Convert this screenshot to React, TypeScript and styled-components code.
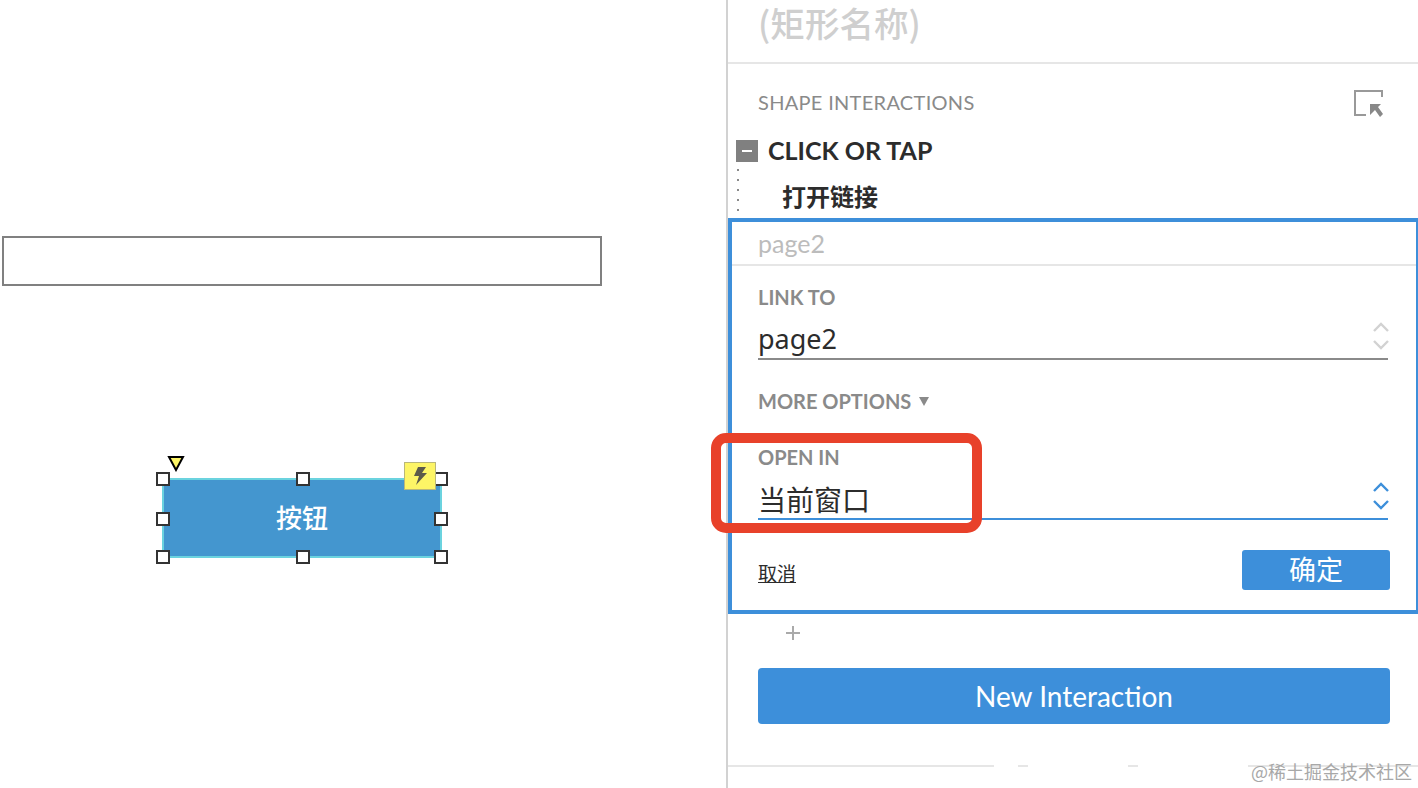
import * as React from 'react';
import styled, { createGlobalStyle } from 'styled-components';

const GlobalStyle = createGlobalStyle`
  html, body {
    margin: 0;
    padding: 0;
    background: #fff;
  }
  body {
    font-family: "Lato", "Noto Sans CJK SC", sans-serif;
  }
`;

const handles = [
  { x: 163, y: 479 },
  { x: 303, y: 479 },
  { x: 441, y: 479 },
  { x: 163, y: 519 },
  { x: 441, y: 519 },
  { x: 163, y: 557 },
  { x: 303, y: 557 },
  { x: 441, y: 557 },
];

const Stepper = ({ color }: { color: string }) => (
  <StepperIcon width="18" height="30" viewBox="0 0 18 30" fill="none" stroke={color} strokeWidth="2.4">
    <path d="M2 10 L9 3 L16 10" />
    <path d="M2 20 L9 27 L16 20" />
  </StepperIcon>
);

export default function App() {
  return (
    <Page>
      <GlobalStyle />
      <Canvas>
        <TextBox />
        <ShapeButton>按钮</ShapeButton>
        {handles.map((h, i) => (
          <Handle key={i} $x={h.x} $y={h.y} />
        ))}
        <Marker width="18" height="17" viewBox="0 0 18 17">
          <path d="M2 2 H16 L9 15 Z" fill="#fdf566" stroke="#000" strokeWidth="2" strokeLinejoin="miter" />
        </Marker>
        <Badge>
          <svg width="16" height="20" viewBox="0 0 16 20">
            <path d="M6 1 H14 L10 7 H15 L4 19 L7 10 H2 Z" fill="#5c5a4a" />
          </svg>
        </Badge>
      </Canvas>

      <Panel>
        <TitleSection>(矩形名称)</TitleSection>

        <InteractionsHeader>
          <SectionLabel>SHAPE INTERACTIONS</SectionLabel>
          <svg width="30" height="30" viewBox="0 0 30 30" fill="none">
            <path d="M12 27 H1 V3 H28 V9" stroke="#999" strokeWidth="2" />
            <path d="M16 16 H27 L24 19 L29 26 L26 29 L21 22 L16 27 Z" fill="#888" />
          </svg>
        </InteractionsHeader>

        <EventRow>
          <Collapse />
          <EventName>CLICK OR TAP</EventName>
        </EventRow>

        <ActionRow>打开链接</ActionRow>

        <EditBox>
          <EditHeader>page2</EditHeader>
          <EditBody>
            <FieldLabel>LINK TO</FieldLabel>
            <SelectRow>
              <SelectValue>page2</SelectValue>
              <Stepper color="#d2d2d2" />
            </SelectRow>

            <MoreOptions>
              MORE OPTIONS <MoreArrow />
            </MoreOptions>

            <OpenInLabel>OPEN IN</OpenInLabel>
            <SelectRow $active>
              <SelectValue $cjk>当前窗口</SelectValue>
              <Stepper color="#3d8fda" />
            </SelectRow>

            <Actions>
              <CancelLink>取消</CancelLink>
              <ConfirmButton>确定</ConfirmButton>
            </Actions>
          </EditBody>
        </EditBox>

        <PlusIcon width="16" height="16" viewBox="0 0 16 16" stroke="#aaa" strokeWidth="2">
          <path d="M8 1 V15 M1 8 H15" />
        </PlusIcon>

        <NewInteraction>New Interaction</NewInteraction>

        <BottomRule />
      </Panel>

      <Highlight />
      <Watermark>@稀土掘金技术社区</Watermark>
    </Page>
  );
}

const Page = styled.div`
  position: relative;
  display: flex;
  width: 1418px;
  height: 788px;
  overflow: hidden;
  background: #fff;
`;

const Canvas = styled.div`
  position: relative;
  flex: 0 0 726px;
  height: 100%;
`;

const TextBox = styled.div`
  position: absolute;
  left: 2px;
  top: 236px;
  width: 600px;
  height: 50px;
  box-sizing: border-box;
  border: 2px solid #808080;
`;

const ShapeButton = styled.div`
  position: absolute;
  left: 162px;
  top: 478px;
  width: 280px;
  height: 80px;
  box-sizing: border-box;
  padding-bottom: 4px;
  display: flex;
  align-items: center;
  justify-content: center;
  background: #4496cf;
  border: 2px solid #6bd3df;
  color: #fff;
  font-size: 26px;
  font-weight: 500;
  font-family: "Noto Sans CJK SC", sans-serif;
`;

const Handle = styled.div<{ $x: number; $y: number }>`
  position: absolute;
  left: ${props => props.$x - 7}px;
  top: ${props => props.$y - 7}px;
  width: 14px;
  height: 14px;
  box-sizing: border-box;
  background: #fff;
  border: 2px solid #333;
`;

const Marker = styled.svg`
  position: absolute;
  left: 167px;
  top: 455px;
`;

const Badge = styled.div`
  position: absolute;
  left: 404px;
  top: 462px;
  width: 32px;
  height: 28px;
  box-sizing: border-box;
  display: flex;
  align-items: center;
  justify-content: center;
  background: #fdf566;
  border: 1px solid #b9b77a;
`;

const Panel = styled.div`
  flex: 1;
  min-width: 0;
  height: 100%;
  box-sizing: border-box;
  border-left: 2px solid #d2d2d2;
  display: flex;
  flex-direction: column;
`;

const TitleSection = styled.div`
  height: 64px;
  flex: none;
  box-sizing: border-box;
  padding: 0 0 18px 30px;
  display: flex;
  align-items: center;
  border-bottom: 2px solid #e6e6e6;
  color: #cfcfcf;
  font-size: 34.6px;
  line-height: 40px;
  font-weight: 500;
  font-family: "Noto Sans CJK SC", sans-serif;
`;

const InteractionsHeader = styled.div`
  height: 68px;
  flex: none;
  box-sizing: border-box;
  padding: 10px 34px 0 30px;
  display: flex;
  align-items: center;
  justify-content: space-between;
`;

const SectionLabel = styled.div`
  margin-bottom: 2px;
  color: #8a8a8a;
  font-size: 20px;
  letter-spacing: 0.3px;
`;

const EventRow = styled.div`
  height: 36px;
  flex: none;
  box-sizing: border-box;
  padding: 2px 0 0 8px;
  display: flex;
  align-items: center;
  gap: 10px;
`;

const Collapse = styled.div`
  position: relative;
  width: 22px;
  height: 22px;
  background: #808080;

  &::after {
    content: "";
    position: absolute;
    left: 6px;
    top: 10px;
    width: 10px;
    height: 2px;
    background: #fff;
  }
`;

const EventName = styled.div`
  margin-bottom: 2px;
  color: #2c2c2c;
  font-size: 25px;
  font-weight: 700;
`;

const ActionRow = styled.div`
  height: 50px;
  flex: none;
  box-sizing: border-box;
  padding: 4px 0 0 54px;
  display: flex;
  align-items: center;
  background: repeating-linear-gradient(180deg, transparent 0 1px, #8a8a8a 1px 3px, transparent 3px 10px) 9px 0 / 2px 100% no-repeat;
  color: #2c2c2c;
  font-size: 24px;
  font-weight: 700;
  font-family: "Noto Sans CJK SC", sans-serif;
`;

const EditBox = styled.div`
  height: 396px;
  flex: none;
  box-sizing: border-box;
  border: 4px solid #3d8fda;
  border-right-width: 2px;
  display: flex;
  flex-direction: column;
`;

const EditHeader = styled.div`
  height: 44px;
  flex: none;
  box-sizing: border-box;
  padding: 0 0 1px 26px;
  display: flex;
  align-items: center;
  border-bottom: 2px solid #e6e6e6;
  color: #bcbcbc;
  font-size: 25px;
`;

const EditBody = styled.div`
  padding: 17px 28px 0 26px;
  display: flex;
  flex-direction: column;
`;

const FieldLabel = styled.div`
  height: 28px;
  line-height: 28px;
  color: #8a8a8a;
  font-size: 20px;
  font-weight: 700;
`;

const SelectRow = styled.div<{ $active?: boolean }>`
  height: 49px;
  box-sizing: border-box;
  padding-top: 8px;
  display: flex;
  align-items: center;
  justify-content: space-between;
  border-bottom: 2px solid ${props => (props.$active ? '#3d8fda' : '#8a8a8a')};
`;

const SelectValue = styled.div<{ $cjk?: boolean }>`
  color: #2c2c2c;
  font-size: ${props => (props.$cjk ? '28px' : '27px')};
  font-family: "Noto Sans", "Noto Sans CJK SC", sans-serif;
`;

const StepperIcon = styled.svg`
  flex: none;
  margin: 0 -2px 5px 0;
`;

const MoreOptions = styled.div`
  margin-top: 27px;
  height: 28px;
  display: flex;
  align-items: center;
  gap: 8px;
  color: #8a8a8a;
  font-size: 20px;
  font-weight: 700;
`;

const MoreArrow = styled.span`
  width: 0;
  height: 0;
  border-left: 5px solid transparent;
  border-right: 5px solid transparent;
  border-top: 9px solid #8a8a8a;
`;

const OpenInLabel = styled(FieldLabel)`
  margin-top: 28px;
`;

const Actions = styled.div`
  margin-top: 30px;
  display: flex;
  align-items: center;
  justify-content: space-between;
`;

const CancelLink = styled.div`
  margin-top: 6px;
  color: #2c2c2c;
  font-size: 19px;
  line-height: 26px;
  text-decoration: underline;
  font-family: "Noto Sans CJK SC", sans-serif;
`;

const ConfirmButton = styled.div`
  width: 148px;
  height: 40px;
  margin-right: -2px;
  padding-bottom: 4px;
  box-sizing: border-box;
  display: flex;
  align-items: center;
  justify-content: center;
  border-radius: 3px;
  background: #3d8fda;
  color: #fff;
  font-size: 27px;
  font-family: "Noto Sans CJK SC", sans-serif;
`;

const PlusIcon = styled.svg`
  flex: none;
  margin: 11px 0 0 57px;
`;

const NewInteraction = styled.div`
  flex: none;
  height: 56px;
  margin: 27px 28px 0 30px;
  display: flex;
  align-items: center;
  justify-content: center;
  border-radius: 4px;
  background: #3d8fda;
  color: #fff;
  font-size: 28px;
`;

const BottomRule = styled.div`
  flex: none;
  height: 2px;
  margin-top: 41px;
  background: linear-gradient(90deg, #e6e6e6 0 266px, #fff 266px 290px, #e6e6e6 290px 300px, #fff 300px 400px, #e6e6e6 400px 410px, #fff 410px 520px, #e6e6e6 520px);
`;

const Highlight = styled.div`
  position: absolute;
  left: 711px;
  top: 433px;
  width: 271px;
  height: 100px;
  box-sizing: border-box;
  border: 10px solid #e8412a;
  border-radius: 15px;
`;

const Watermark = styled.div`
  position: absolute;
  right: 6px;
  top: 759px;
  color: #a8a8a8;
  font-size: 18px;
  line-height: 24px;
  font-family: "Noto Sans CJK SC", sans-serif;
`;
